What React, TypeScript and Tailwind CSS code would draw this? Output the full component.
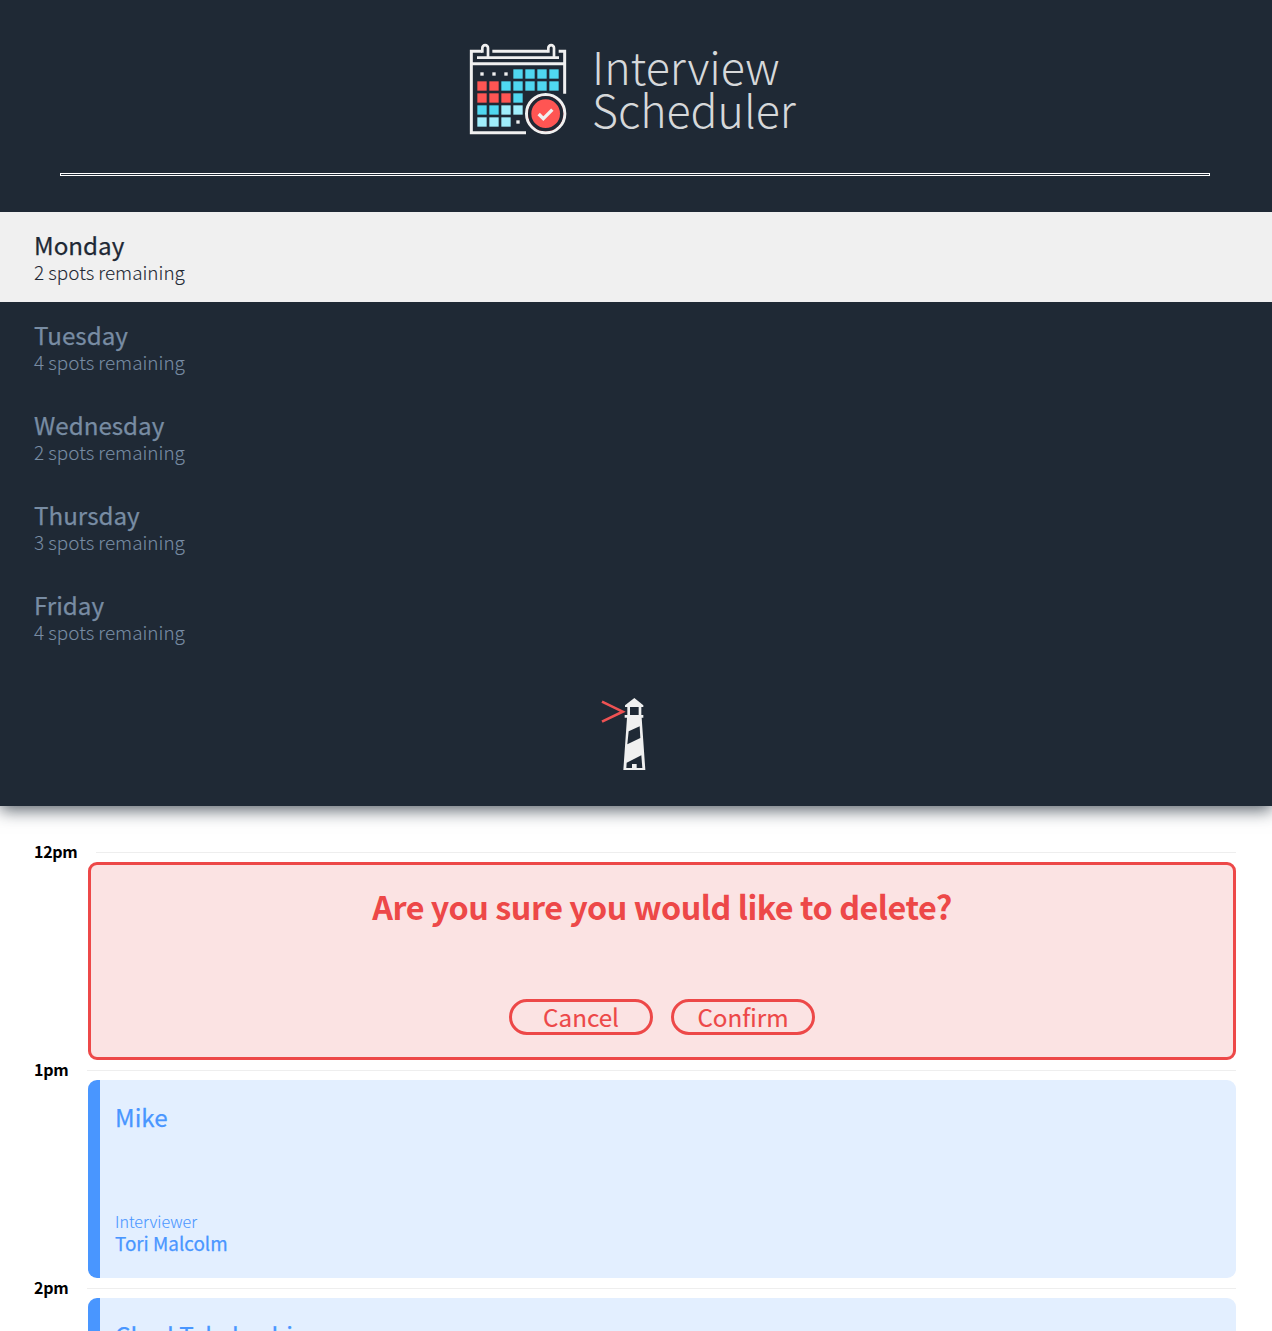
const squares: { y: number; fills: [number, string][] }[] = [
  { y: 103, fills: [[3, "#4fd8f0"], [4, "#4fd8f0"], [5, "#4fd8f0"], [6, "#4fd8f0"]] },
  { y: 139, fills: [[0, "#ff5553"], [1, "#ff5553"], [2, "#4fd8f0"], [3, "#4fd8f0"], [4, "#4fd8f0"], [5, "#4fd8f0"], [6, "#4fd8f0"]] },
  { y: 175, fills: [[0, "#ff5553"], [1, "#ff5553"], [2, "#ff5553"], [3, "#4fd8f0"]] },
  { y: 211, fills: [[0, "#4fd8f0"], [1, "#4fd8f0"], [2, "#a0eefc"], [3, "#a0eefc"]] },
  { y: 247, fills: [[0, "#a0eefc"], [1, "#a0eefc"], [2, "#a0eefc"]] },
];

const days = [
  { name: "Monday", spots: 2, selected: true },
  { name: "Tuesday", spots: 4, selected: false },
  { name: "Wednesday", spots: 2, selected: false },
  { name: "Thursday", spots: 3, selected: false },
  { name: "Friday", spots: 4, selected: false },
];

function CalendarLogo() {
  return (
    <svg viewBox="0 0 360 330" className="h-[110px] w-[120px] shrink-0" fill="none">
      <g stroke="#f0f0f0" strokeWidth="9">
        <path d="M66 49H34V293H198" />
        <path d="M97 49H262M296 49H314V176" />
        <path d="M51 68H297" strokeWidth="8" />
        <path d="M34 86H314" />
        <path d="M67 53V39a8.500 8.500 0 0 1 17 0V68M265 53V39a8.500 8.500 0 0 1 17 0V68" strokeWidth="8" />
      </g>
      {squares.map((row) =>
        row.fills.map(([col, fill]) => (
          <rect key={`${row.y}-${col}`} x={52 + col * 36} y={row.y} width="28" height="28" fill={fill} />
        )),
      )}
      <g fill="#f0f0f0">
        <rect x="61" y="112" width="10" height="10" />
        <rect x="97" y="112" width="10" height="10" />
        <rect x="133" y="112" width="10" height="10" />
        <rect x="169" y="256" width="10" height="10" />
      </g>
      <circle cx="257" cy="236" r="57.500" fill="#ff5553" stroke="#f0f0f0" strokeWidth="9" />
      <circle cx="257" cy="236" r="48" stroke="#1f2935" strokeWidth="10" />
      <path d="M236 237L250 251L277 224" stroke="#f0f0f0" strokeWidth="10" />
    </svg>
  );
}

function Lighthouse() {
  return (
    <svg viewBox="0 0 210 270" className="h-[90px] w-[70px]" fill="none">
      <path d="M36 35L98 65L36 95" stroke="#ee5253" strokeWidth="8" />
      <path d="M105 51V46L133 24L160 46V51Z" fill="#f0f0f0" />
      <path d="M116 50V76M150 50V76" stroke="#f0f0f0" strokeWidth="8" />
      <path d="M104 75H160V83H155L166 240H100L111 83H104Z" fill="#f0f0f0" />
      <path d="M116 124L149 109L151 144L112 163ZM110 218L154 196L157 234H140V222H126V234H109Z" fill="#1f2935" />
    </svg>
  );
}

function Time({ label, first = false }: { label: string; first?: boolean }) {
  return (
    <header className="flex h-5 items-center">
      <h4
        className={`mb-0.5 text-[16px] leading-5 font-bold tracking-[-0.3px] text-black ${first ? "w-[62px]" : "w-[53px]"}`}
      >
        {label}
      </h4>
      <div className="h-px flex-1 bg-[#eeeeee]" />
    </header>
  );
}

function Show({ student, interviewer }: { student: string; interviewer: string }) {
  return (
    <article className="ml-[54px] flex h-[198px] flex-col justify-between rounded-[9px] border-l-[12px] border-[#4996ff] bg-[#e3efff] pt-[19px] pb-[21px] pl-[15px] text-[#4996ff]">
      <h2 className="text-[24.2px] leading-9 [-webkit-text-stroke:0.25px]">{student}</h2>
      <section>
        <h4 className="text-[16.1px] leading-6 font-light [-webkit-text-stroke:0.1px]">Interviewer</h4>
        <h3 className="-mt-1 text-[18.85px] leading-7 [-webkit-text-stroke:0.25px]">{interviewer}</h3>
      </section>
    </article>
  );
}

function PillButton({ label }: { label: string }) {
  return (
    <button className="flex h-9 w-36 items-center justify-center rounded-full border-[3px] border-[#ed4848] text-[24.2px] leading-[30px] [-webkit-text-stroke:0.15px]">
      {label}
    </button>
  );
}

function Confirm() {
  return (
    <article className="ml-[54px] flex h-[198px] flex-col items-center justify-between rounded-[9px] border-[3px] border-[#ed4848] bg-[#fbe3e3] pt-[19px] pb-[22px] text-[#ed4848]">
      <h1 className="text-[32.3px] leading-[44px] font-bold tracking-[-0.47px]">Are you sure you would like to delete?</h1>
      <section className="flex gap-[18px]">
        <PillButton label="Cancel" />
        <PillButton label="Confirm" />
      </section>
    </article>
  );
}

export default function App() {
  return (
    <main className="h-[1331px] overflow-hidden bg-white font-['Noto_Sans_CJK_SC','Noto_Sans',sans-serif]">
      <section className="flex h-[806px] flex-col bg-[#1f2935] pt-[35px] shadow-[0_4px_16px_rgba(31,41,53,0.75)]">
        <div className="flex h-[110px] pl-[460px]">
          <CalendarLogo />
          <div className="pt-[9px] pl-3 text-[44.7px] leading-[43px] font-light text-[#d6d8da]">
            <div>Interview</div>
            <div>Scheduler</div>
          </div>
        </div>
        <div className="mt-7 mr-[62px] ml-[60px] h-[3px] border border-white" />
        <nav className="mt-9">
          <ul>
            {days.map((day) => (
              <li
                key={day.name}
                className={`h-[90px] pt-[17px] pl-[34px] ${day.selected ? "bg-[#f0f0f0] text-[#1f2935]" : "text-[#788ca3]"}`}
              >
                <h2 className="text-[24.2px] leading-8 [-webkit-text-stroke:0.25px]">{day.name}</h2>
                <h3 className="text-[18.9px] leading-[22px] font-light [-webkit-text-stroke:0.1px]">
                  {day.spots} spots remaining
                </h3>
              </li>
            ))}
          </ul>
        </nav>
        <div className="mt-[28px] pl-[590px]">
          <Lighthouse />
        </div>
      </section>
      <section className="pt-9 pr-9 pl-[34px]">
        <Time label="12pm" first />
        <Confirm />
        <Time label="1pm" />
        <Show student="Mike" interviewer="Tori Malcolm" />
        <Time label="2pm" />
        <Show student="Chad Takahashi" interviewer="Tori Malcolm" />
      </section>
    </main>
  );
}
